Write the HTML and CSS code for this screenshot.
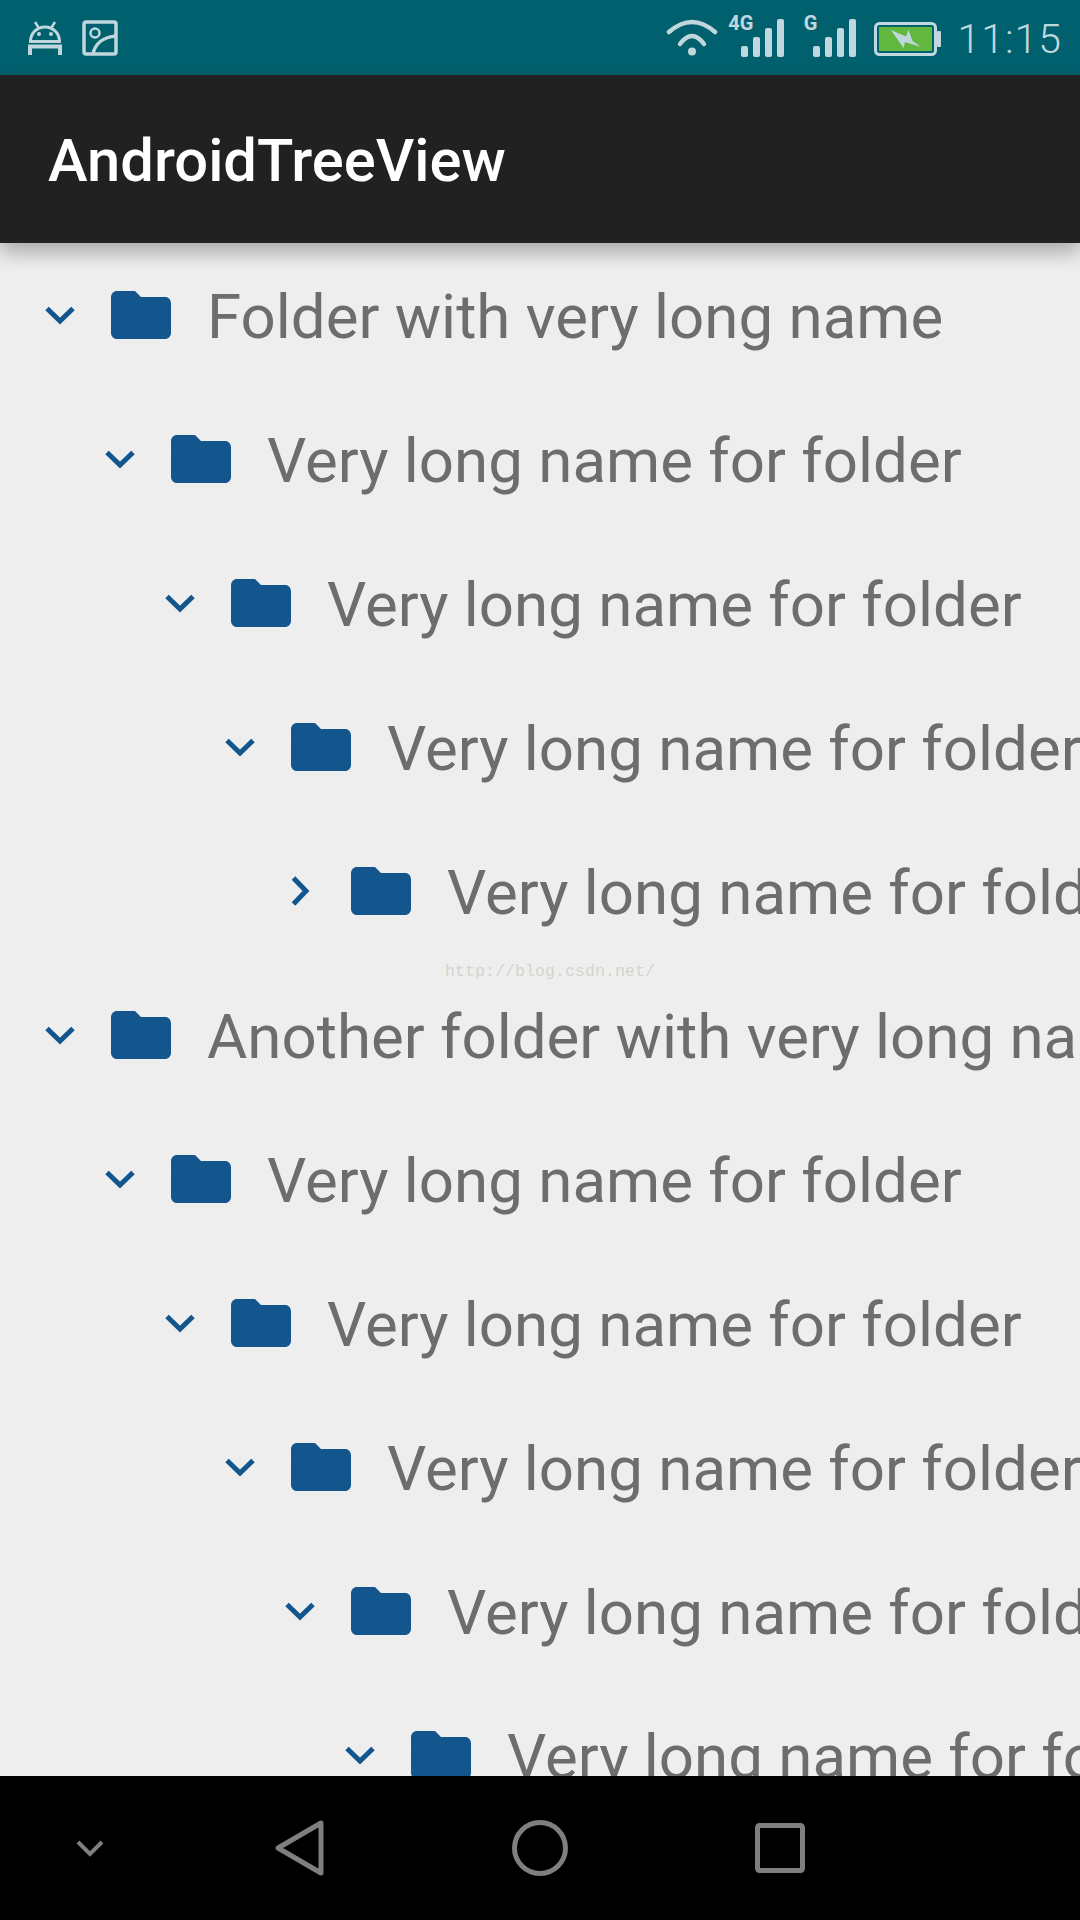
FILE: index.html
```html
<!DOCTYPE html>
<html lang="en">
<head>
    <meta charset="UTF-8">
    <meta name="viewport" content="width=device-width, initial-scale=1.0">
    <title>AndroidTreeView</title>
    <link rel="stylesheet" href="styles.css">
</head>
<body>

    <svg class="defs" width="0" height="0">
        <symbol id="folder" viewBox="0 0 24 24">
            <path d="M10 4H4c-1.1 0-1.99.9-1.99 2L2 18c0 1.1.9 2 2 2h16c1.1 0 2-.9 2-2V8c0-1.1-.9-2-2-2h-8l-2-2z"/>
        </symbol>
        <symbol id="open" viewBox="0 0 30 30">
            <path d="M2 8.500 15 21 28 8.500" fill="none" stroke="currentColor" stroke-width="5"/>
        </symbol>
        <symbol id="closed" viewBox="0 0 30 30">
            <path d="M8.500 2 21 15 8.500 28" fill="none" stroke="currentColor" stroke-width="5"/>
        </symbol>
        <symbol id="bars" viewBox="0 0 44 38">
            <rect x="0" y="27" width="7" height="11" rx="2"/>
            <rect x="12" y="18" width="7" height="20" rx="2"/>
            <rect x="24" y="9" width="7" height="29" rx="2"/>
            <rect x="36" y="0" width="7" height="38" rx="2"/>
        </symbol>
    </svg>

    <!-- status bar -->
    <div class="status-bar">
        <div class="status-left">
            <svg width="36" height="36" viewBox="0 0 36 36" fill="none" stroke="#c0d8dd" stroke-width="3">
                <path d="M8 2l3.500 5.500M28 2l-3.500 5.500" stroke-width="2.500"/>
                <path d="M3.500 21.500c0-8 6-14.500 14.500-14.500s14.500 6.500 14.500 14.500z"/>
                <circle cx="12" cy="14" r="2" fill="#c0d8dd" stroke="none"/>
                <circle cx="24" cy="14" r="2" fill="#c0d8dd" stroke="none"/>
                <path d="M3 35V26.500h30V35" stroke-width="4"/>
            </svg>
            <svg width="36" height="36" viewBox="0 0 36 36" fill="none" stroke="#c0d8dd" stroke-width="3.500">
                <rect x="2" y="2" width="32" height="32" rx="2"/>
                <circle cx="13" cy="13" r="4.500" stroke-width="2.500"/>
                <path d="M11 34c2-10 10-17 23-18"/>
            </svg>
        </div>
        <div class="status-right">
            <svg class="wifi" width="52" height="40" viewBox="0 0 52 40" fill="none" stroke="#c0d8dd" stroke-width="4.500" stroke-linecap="round">
                <path d="M3 14Q26 -6 49 14"/>
                <path d="M14 26Q26 10 38 26"/>
                <circle cx="26" cy="33.500" r="4" fill="#c0d8dd" stroke="none"/>
            </svg>
            <div class="signal signal-4g">
                <span class="net-label">4G</span>
                <svg width="44" height="38"><use href="#bars"/></svg>
            </div>
            <div class="signal signal-g">
                <span class="net-label">G</span>
                <svg width="44" height="38"><use href="#bars"/></svg>
            </div>
            <svg class="battery" width="68" height="34" viewBox="0 0 68 34">
                <rect x="1.500" y="1.500" width="60" height="31" rx="4" fill="none" stroke="#c0d8dd" stroke-width="3"/>
                <rect x="5" y="5" width="53" height="24" fill="#62b73e"/>
                <rect x="63" y="9" width="4" height="16" rx="1" fill="#c0d8dd"/>
                <path d="M17 8L32 14.500 34.500 8 38.500 19 47 25 31 20 29.500 26z" fill="#c0d8dd"/>
            </svg>
            <span class="clock">11:15</span>
        </div>
    </div>

    <!-- app bar -->
    <div class="app-bar">AndroidTreeView</div>

    <!-- tree -->
    <div class="tree">
        <div class="node level-0"><svg class="arrow"><use href="#open"/></svg><svg class="folder"><use href="#folder"/></svg><span class="name">Folder with very long name</span></div>
        <div class="node level-1"><svg class="arrow"><use href="#open"/></svg><svg class="folder"><use href="#folder"/></svg><span class="name">Very long name for folder</span></div>
        <div class="node level-2"><svg class="arrow"><use href="#open"/></svg><svg class="folder"><use href="#folder"/></svg><span class="name">Very long name for folder</span></div>
        <div class="node level-3"><svg class="arrow"><use href="#open"/></svg><svg class="folder"><use href="#folder"/></svg><span class="name">Very long name for folder</span></div>
        <div class="node level-4"><svg class="arrow"><use href="#closed"/></svg><svg class="folder"><use href="#folder"/></svg><span class="name">Very long name for folder</span></div>
        <div class="node level-0"><svg class="arrow"><use href="#open"/></svg><svg class="folder"><use href="#folder"/></svg><span class="name">Another folder with very long name</span></div>
        <div class="node level-1"><svg class="arrow"><use href="#open"/></svg><svg class="folder"><use href="#folder"/></svg><span class="name">Very long name for folder</span></div>
        <div class="node level-2"><svg class="arrow"><use href="#open"/></svg><svg class="folder"><use href="#folder"/></svg><span class="name">Very long name for folder</span></div>
        <div class="node level-3"><svg class="arrow"><use href="#open"/></svg><svg class="folder"><use href="#folder"/></svg><span class="name">Very long name for folder</span></div>
        <div class="node level-4"><svg class="arrow"><use href="#open"/></svg><svg class="folder"><use href="#folder"/></svg><span class="name">Very long name for folder</span></div>
        <div class="node level-5"><svg class="arrow"><use href="#open"/></svg><svg class="folder"><use href="#folder"/></svg><span class="name">Very long name for folder</span></div>
        <span class="watermark">http://blog.csdn.net/</span>
    </div>

    <!-- navigation bar -->
    <div class="nav-bar">
        <svg width="30" height="18" viewBox="0 0 30 18" fill="none" stroke="#7f7f7f" stroke-width="4"><path d="M3 3l12 12L27 3"/></svg>
        <svg width="52" height="56" viewBox="0 0 52 56" fill="none" stroke="#7f7f7f" stroke-width="5" stroke-linejoin="round"><path d="M47 3v50L4 28z"/></svg>
        <svg width="56" height="56" viewBox="0 0 56 56" fill="none" stroke="#7f7f7f" stroke-width="5"><circle cx="28" cy="28" r="25.500"/></svg>
        <svg width="50" height="50" viewBox="0 0 50 50" fill="none" stroke="#7f7f7f" stroke-width="5"><rect x="2.500" y="2.500" width="45" height="45" rx="2"/></svg>
    </div>

</body>
</html>
```

FILE: styles.css
```css
body {
    margin: 0;
    width: 1080px;
    height: 1920px;
    display: flex;
    flex-direction: column;
    overflow: hidden;
    background-color: #eeeeee;
    font-family: 'Roboto', sans-serif;
}

.defs {
    position: absolute;
}

.status-bar {
    height: 75px;
    display: flex;
    justify-content: space-between;
    align-items: center;
    padding: 0 18px 0 27px;
    background-color: #00606e;
    color: #c0d8dd;
}

.status-left {
    display: flex;
    gap: 19px;
}

.status-right {
    display: flex;
    align-items: center;
}

.wifi {
    margin-right: 23px;
}

.signal {
    position: relative;
    display: flex;
    fill: #c0d8dd;
}

.signal-g {
    margin-left: 28px;
}

.net-label {
    position: absolute;
    top: -5px;
    right: 32px;
    font-size: 20px;
    font-weight: 700;
    line-height: 18px;
}

.signal-g .net-label {
    right: 40px;
}

.battery {
    margin-left: 17px;
    margin-top: 2px;
}

.clock {
    margin-left: 15px;
    font-size: 41px;
    font-weight: 300;
    letter-spacing: 1px;
    margin-top: 2px;
}

.app-bar {
    position: relative;
    height: 168px;
    line-height: 172px;
    padding-left: 48px;
    background-color: #212121;
    color: #ffffff;
    font-size: 59.7px;
    font-weight: 500;
    box-shadow: 0 10px 18px rgba(0, 0, 0, 0.28);
}

.tree {
    position: relative;
    flex: 1;
    overflow: hidden;
}

.node {
    height: 144px;
    display: flex;
    align-items: center;
    white-space: nowrap;
}

.level-0 { padding-left: 30px; }
.level-1 { padding-left: 90px; }
.level-2 { padding-left: 150px; }
.level-3 { padding-left: 210px; }
.level-4 { padding-left: 270px; }
.level-5 { padding-left: 330px; }

.arrow {
    width: 30px;
    height: 30px;
    padding: 0 15px;
    flex-shrink: 0;
    color: #13568e;
}

.folder {
    width: 72px;
    height: 72px;
    margin-left: 15px;
    flex-shrink: 0;
    fill: #13568e;
}

.name {
    margin-top: 4px;
    margin-left: 30px;
    font-size: 61.8px;
    color: #6d6d6d;
}

.watermark {
    position: absolute;
    left: 445px;
    top: 719px;
    font-family: 'Liberation Mono', monospace;
    font-size: 16.67px;
    color: #d4d4cf;
}

.nav-bar {
    height: 144px;
    flex-shrink: 0;
    display: grid;
    grid-template-columns: 180px 240px 240px 240px;
    align-items: center;
    justify-items: center;
    background-color: #000000;
}
```
